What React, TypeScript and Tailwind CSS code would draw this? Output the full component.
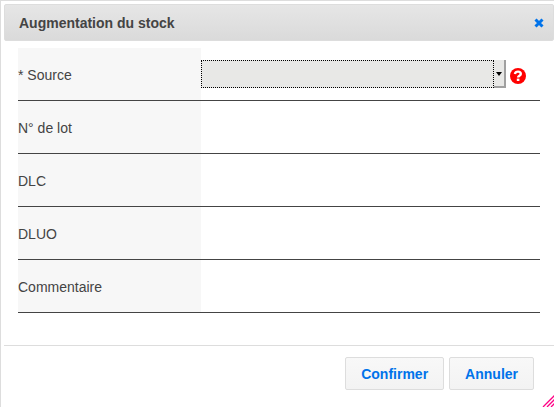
import { useState } from "react";

const textRows = [
  { id: "lot", label: "N° de lot" },
  { id: "dlc", label: "DLC" },
  { id: "dluo", label: "DLUO" },
  { id: "commentaire", label: "Commentaire" },
];

const rowClass = "flex h-[53px] border-b border-[#444444]";
const labelClass = "flex w-[183px] shrink-0 items-center bg-[#f7f7f7] pt-[2px]";
const buttonClass =
  "h-[33px] rounded-xs border border-[#dddddd] bg-linear-to-b from-[#f8f8f8] to-[#f3f3f3] px-[15px] font-bold text-[#0073ea]";

function HelpIcon() {
  return (
    <svg viewBox="0 0 16 16" className="size-4" aria-hidden="true">
      <circle cx="8" cy="8" r="8" fill="#ff0000" />
      <path
        d="M4.9 6C5.3 4.4 6.4 3.6 8 3.6c1.7 0 2.8 1 2.8 2.3 0 1.8-2.7 1.7-2.7 3.5"
        fill="none"
        stroke="#ffffff"
        strokeWidth="2.4"
      />
      <rect x="6.8" y="10.6" width="2.6" height="2.4" fill="#ffffff" />
    </svg>
  );
}

function ResizeGrip() {
  return (
    <svg
      viewBox="0 0 12 12"
      className="absolute right-0 bottom-0 block size-3 cursor-se-resize fill-none stroke-[#ff0084]"
      aria-hidden="true"
    >
      <path d="M1 12L13 0M5 12L13 4M9 12L13 8" strokeWidth="1.3" />
    </svg>
  );
}

export default function App() {
  const [values, setValues] = useState<Record<string, string>>({});

  return (
    <div
      role="dialog"
      aria-labelledby="dialog-title"
      className="relative min-h-screen border-t border-l border-[#dddddd] bg-white pt-[3px] pl-[3px] font-['Liberation_Sans',Arial,sans-serif] text-sm text-[#444444]"
    >
      <header className="flex h-[37px] items-center justify-between rounded-xs border border-[#dddddd] bg-linear-to-b from-[#e6e6e6] to-[#dadada] pr-[9px] pl-[14px]">
        <h1 id="dialog-title" className="text-sm font-bold">
          Augmentation du stock
        </h1>
        <button type="button" aria-label="Fermer">
          <svg viewBox="0 0 10 10" className="size-[10px]" aria-hidden="true">
            <path d="M1.5 1.5l7 7M8.5 1.5l-7 7" stroke="#0073ea" strokeWidth="3" />
          </svg>
        </button>
      </header>

      <form>
        <div className="pt-[7px] pr-[14px] pb-8 pl-[14px]">
          <div className={rowClass}>
            <label htmlFor="source" className={labelClass}>
              * Source
            </label>
            <div className="flex grow items-center gap-1 pr-[14px]">
              <div className="relative h-7 grow">
                <select
                  id="source"
                  required
                  className="block size-full appearance-none border border-dotted border-black bg-[#e8e8e6] px-1 outline-none"
                >
                  <option value=""></option>
                </select>
                <span className="pointer-events-none absolute inset-y-0 right-0 flex w-3 items-center justify-center border-r-2 border-b-2 border-r-[#a0a0a0] border-b-[#a0a0a0] bg-[#e8e8e6] pt-[2px]">
                  <svg viewBox="0 0 6 4" className="h-1 w-[6px]" aria-hidden="true">
                    <path d="M0 0h6L3 4z" fill="#000000" />
                  </svg>
                </span>
                <span className="pointer-events-none absolute inset-y-0 right-3 border-l border-dotted border-black" />
              </div>
              <button type="button" aria-label="Aide" className="mt-1">
                <HelpIcon />
              </button>
            </div>
          </div>
          {textRows.map(({ id, label }) => (
            <div key={id} className={rowClass}>
              <label htmlFor={id} className={labelClass}>
                {label}
              </label>
              <input
                id={id}
                type="text"
                value={values[id] ?? ""}
                onChange={(e) => setValues({ ...values, [id]: e.target.value })}
                className="min-w-0 grow px-1 outline-none"
              />
            </div>
          ))}
        </div>

        <footer className="flex justify-end gap-[5px] border-t border-[#dddddd] pt-[11px] pr-5">
          <button type="button" className={buttonClass}>
            Confirmer
          </button>
          <button type="button" className={buttonClass}>
            Annuler
          </button>
        </footer>
      </form>

      <ResizeGrip />
    </div>
  );
}
